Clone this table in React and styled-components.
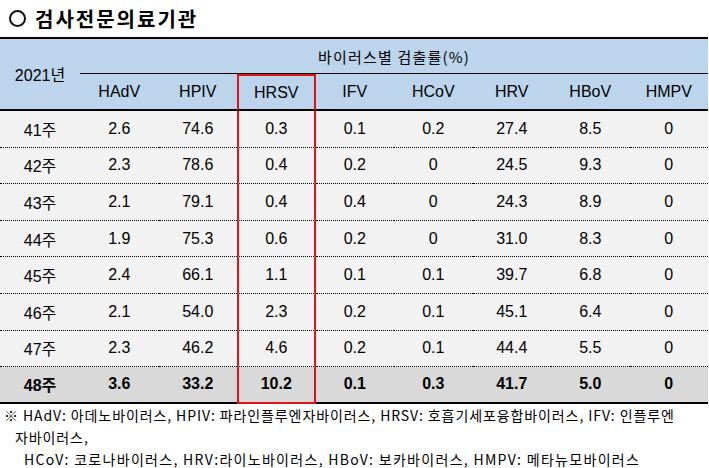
import React from "react";
import styled, { createGlobalStyle } from "styled-components";

const viruses = ["HAdV", "HPIV", "HRSV", "IFV", "HCoV", "HRV", "HBoV", "HMPV"];
const focus = 2; // HRSV column is boxed in red
const RED = "#e0121c";

const rows = [
  ["41주", "2.6", "74.6", "0.3", "0.1", "0.2", "27.4", "8.5", "0"],
  ["42주", "2.3", "78.6", "0.4", "0.2", "0", "24.5", "9.3", "0"],
  ["43주", "2.1", "79.1", "0.4", "0.4", "0", "24.3", "8.9", "0"],
  ["44주", "1.9", "75.3", "0.6", "0.2", "0", "31.0", "8.3", "0"],
  ["45주", "2.4", "66.1", "1.1", "0.1", "0.1", "39.7", "6.8", "0"],
  ["46주", "2.1", "54.0", "2.3", "0.2", "0.1", "45.1", "6.4", "0"],
  ["47주", "2.3", "46.2", "4.6", "0.2", "0.1", "44.4", "5.5", "0"],
  ["48주", "3.6", "33.2", "10.2", "0.1", "0.3", "41.7", "5.0", "0"],
];

const GlobalStyle = createGlobalStyle`
  body {
    margin: 0;
    background: #fff;
    font-family: "Liberation Sans", "Noto Sans CJK KR", sans-serif;
    color: #000;
  }
`;

const Page = styled.div`
  width: 709px;
  height: 468px;
  overflow: hidden;
`;

const Title = styled.h1`
  margin: 0;
  height: 37px;
  display: flex;
  align-items: center;
  gap: 9px;
  padding-left: 9px;
  font-family: "Noto Sans CJK KR", sans-serif;
  font-size: 20px;
  font-weight: 700;
  letter-spacing: 2px;
`;

const Ring = styled.span`
  width: 13px;
  height: 13px;
  border: 2px solid #111;
  border-radius: 50%;
`;

const Table = styled.table`
  width: 708px;
  border-collapse: separate;
  border-spacing: 0;
  table-layout: fixed;
  font-size: 16px;
`;

const HeadRow = styled.tr`
  background: #bdd4ed;
  height: ${(p) => p.$h}px;
`;

const HeadCell = styled.th`
  font-weight: 400;
  text-align: center;
  vertical-align: middle;
  padding: 0;
  border-top: ${(p) => (p.$top ? "2px solid #000" : p.$focus ? `2px solid ${RED}` : "none")};
  border-bottom: ${(p) => (p.$thin ? "1px solid #000" : "2px solid #000")};
  border-left: ${(p) => (p.$focus ? `2px solid ${RED}` : "none")};
  border-right: ${(p) => (p.$focus ? `2px solid ${RED}` : "none")};
`;

const Group = styled.span`
  font-family: "Noto Sans CJK KR", sans-serif;
  font-size: 15px;
  letter-spacing: 1.2px;
`;

const BodyRow = styled.tr`
  height: 36.6px;
  background: ${(p) => (p.$total ? "#d9d9d9" : "#f2f2f2")};
  font-weight: ${(p) => (p.$total ? 700 : 400)};
`;

const Cell = styled.td`
  text-align: center;
  padding: 0;
  border-bottom: ${(p) =>
    p.$last ? (p.$focus ? `2px solid ${RED}` : "2px solid #000") : "1px dotted #000"};
  border-left: ${(p) => (p.$focus ? `2px solid ${RED}` : "none")};
  border-right: ${(p) => (p.$focus ? `2px solid ${RED}` : "none")};
`;

const Notes = styled.div`
  font-family: "Noto Sans CJK KR", sans-serif;
  font-size: 14px;
  line-height: 22px;
  white-space: nowrap;
`;

const NoteLine = styled.div`
  padding-left: ${(p) => p.$indent}px;
  letter-spacing: ${(p) => p.$spacing}px;
`;

export default function App() {
  return (
    <Page>
      <GlobalStyle />
      <Title>
        <Ring />
        검사전문의료기관
      </Title>
      <Table>
        <colgroup>
          <col style={{ width: 80 }} />
          {viruses.map((v) => (
            <col key={v} />
          ))}
        </colgroup>
        <thead>
          <HeadRow $h={37}>
            <HeadCell rowSpan={2} $top>
              2021년
            </HeadCell>
            <HeadCell colSpan={8} $top $thin>
              <Group>바이러스별 검출률(%)</Group>
            </HeadCell>
          </HeadRow>
          <HeadRow $h={37}>
            {viruses.map((v, i) => (
              <HeadCell key={v} $focus={i === focus}>
                {v}
              </HeadCell>
            ))}
          </HeadRow>
        </thead>
        <tbody>
          {rows.map((r, ri) => {
            const last = ri === rows.length - 1;
            return (
              <BodyRow key={r[0]} $total={last}>
                <Cell $last={last}>{r[0]}</Cell>
                {r.slice(1).map((v, i) => (
                  <Cell key={i} $focus={i === focus} $last={last}>
                    {v}
                  </Cell>
                ))}
              </BodyRow>
            );
          })}
        </tbody>
      </Table>
      <Notes>
        <NoteLine $indent={4} $spacing={0.9}>
          ※ HAdV: 아데노바이러스, HPIV: 파라인플루엔자바이러스, HRSV: 호흡기세포융합바이러스, IFV: 인플루엔
        </NoteLine>
        <NoteLine $indent={15} $spacing={0.9}>
          자바이러스,
        </NoteLine>
        <NoteLine $indent={24} $spacing={1.3}>
          HCoV: 코로나바이러스, HRV:라이노바이러스, HBoV: 보카바이러스, HMPV: 메타뉴모바이러스
        </NoteLine>
      </Notes>
    </Page>
  );
}
